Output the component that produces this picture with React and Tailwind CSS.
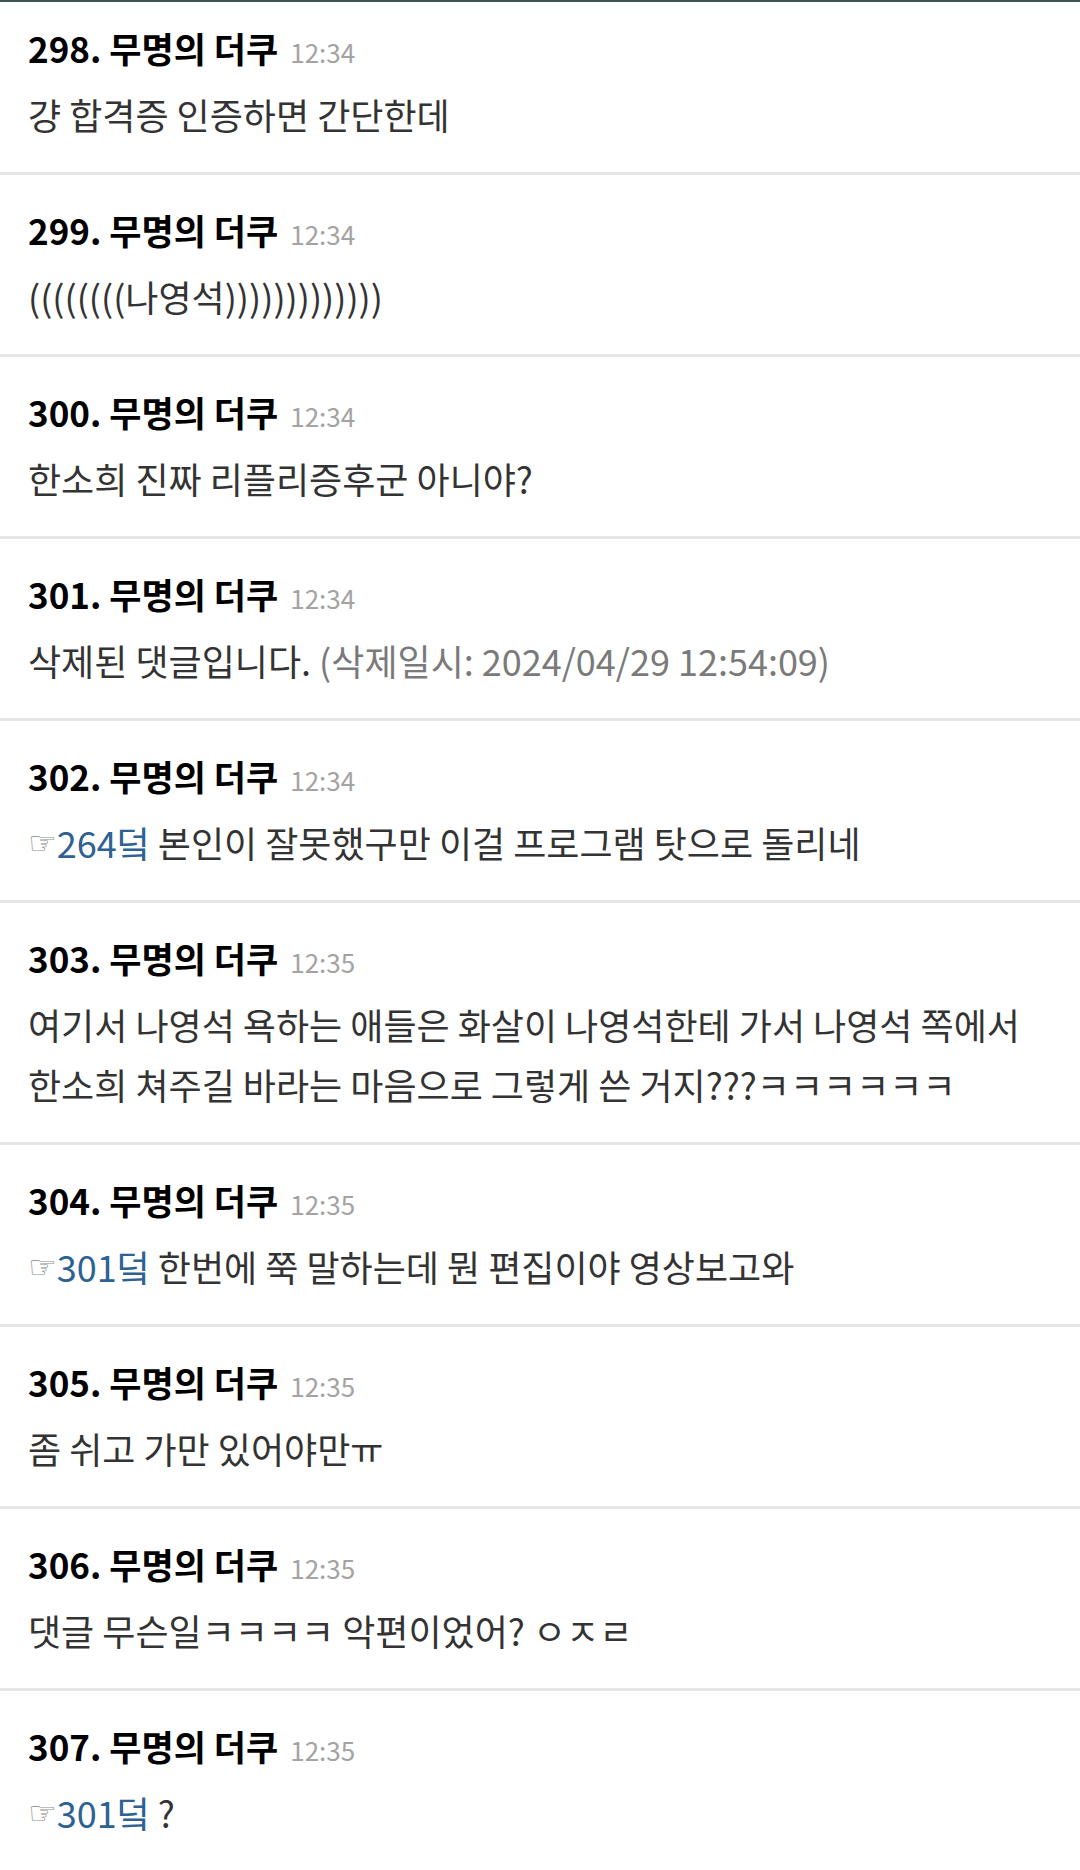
import React from 'react';

const comments = [
  { no: 298, time: '12:34', body: [{ t: '걍 합격증 인증하면 간단한데' }] },
  { no: 299, time: '12:34', body: [{ t: '((((((((나영석)))))))))))))' }] },
  { no: 300, time: '12:34', body: [{ t: '한소희 진짜 리플리증후군 아니야?' }] },
  {
    no: 301,
    time: '12:34',
    body: [{ t: '삭제된 댓글입니다. ' }, { t: '(삭제일시: 2024/04/29 12:54:09)', muted: true }],
  },
  { no: 302, time: '12:34', body: [{ ref: '264덬' }, { t: ' 본인이 잘못했구만 이걸 프로그램 탓으로 돌리네' }] },
  {
    no: 303,
    time: '12:35',
    body: [{ t: '여기서 나영석 욕하는 애들은 화살이 나영석한테 가서 나영석 쪽에서 한소희 쳐주길 바라는 마음으로 그렇게 쓴 거지???ㅋㅋㅋㅋㅋㅋ' }],
  },
  { no: 304, time: '12:35', body: [{ ref: '301덬' }, { t: ' 한번에 쭉 말하는데 뭔 편집이야 영상보고와' }] },
  { no: 305, time: '12:35', body: [{ t: '좀 쉬고 가만 있어야만ㅠ' }] },
  { no: 306, time: '12:35', body: [{ t: '댓글 무슨일ㅋㅋㅋㅋ 악편이었어? ㅇㅈㄹ' }] },
  { no: 307, time: '12:35', body: [{ ref: '301덬' }, { t: ' ?' }], last: true },
];

function Comment({ c, first }) {
  return (
    <div
      className={`${first ? 'pt-[22px]' : 'pt-[31px]'} pb-[28px] px-[28px] ${
        c.last ? '' : 'border-b-[3px] border-[#e6e6e6]'
      }`}
    >
      <div className="h-[48px] leading-[48px] text-[35px] whitespace-nowrap">
        <span className="font-bold text-black">{c.no}. 무명의 더쿠</span>
        <span className="ml-[12px] text-[26px] leading-none text-[#a3a3a3]">{c.time}</span>
      </div>
      <div className="mt-[12px] text-[36px] leading-[60px] text-[#333333] break-keep">
        {c.body.map((p, i) =>
          p.ref ? (
            <span key={i}>
              <span className="text-[32px] leading-none text-[#8a8a8a] font-['DejaVu_Sans'] align-[4px]">☞</span>
              <span className="text-[#2d6293]">{p.ref}</span>
            </span>
          ) : (
            <span key={i} className={p.muted ? 'text-[#7a7a7a]' : ''}>
              {p.t}
            </span>
          )
        )}
      </div>
    </div>
  );
}

export default function App() {
  return (
    <div className="w-[1080px] h-[1870px] bg-white font-['Noto_Sans_CJK_KR','Noto_Sans',sans-serif] overflow-hidden">
      <div className="h-[2px] bg-[#3e5256]" />
      {comments.map((c, i) => (
        <Comment key={c.no} c={c} first={i === 0} />
      ))}
    </div>
  );
}
